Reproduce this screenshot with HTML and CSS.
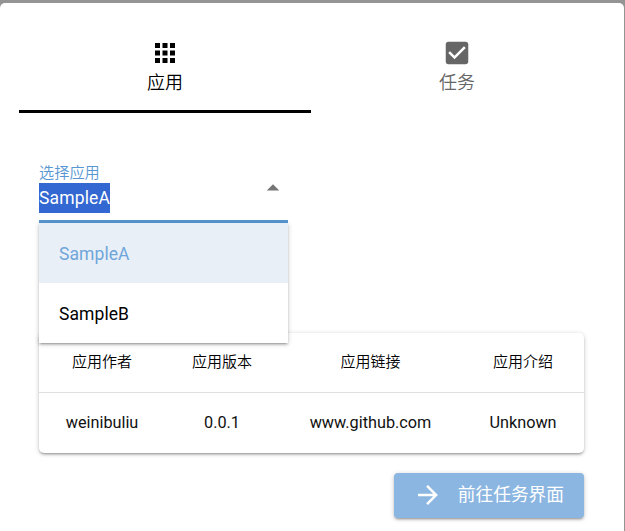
FILE: index.html
```html
<!DOCTYPE html>
<html lang="zh-CN">
<head>
<meta charset="utf-8">
<title>应用</title>
<link rel="stylesheet" href="styles.css">
</head>
<body>
<main class="dialog">
  <nav class="tabs">
    <div class="tab tab-active">
      <svg class="icon" viewBox="0 0 24 24"><path d="M4 8h4V4H4zm6 12h4v-4h-4zm-6 0h4v-4H4zm0-6h4v-4H4zm6 0h4v-4h-4zm6-10v4h4V4zm-6 4h4V4h-4zm6 6h4v-4h-4zm0 6h4v-4h-4z"/></svg>
      <span>应用</span>
    </div>
    <div class="tab">
      <svg class="icon" viewBox="0 0 24 24"><path d="M19 3H5c-1.11 0-2 .9-2 2v14c0 1.1.89 2 2 2h14c1.11 0 2-.9 2-2V5c0-1.1-.89-2-2-2zm-9 14l-5-5 1.41-1.41L10 14.17l7.59-7.59L19 8l-9 9z"/></svg>
      <span>任务</span>
    </div>
  </nav>
  <section class="select">
    <div class="field">
      <div>
        <div class="label">选择应用</div>
        <div class="value"><span class="selected-text">SampleA</span></div>
      </div>
      <svg class="icon caret" viewBox="0 0 24 24"><path d="M7 14l5-5 5 5z"/></svg>
    </div>
    <ul class="menu">
      <li class="option option-active">SampleA</li>
      <li class="option">SampleB</li>
    </ul>
  </section>
  <table class="info">
    <colgroup><col class="author"><col class="version"><col class="link"><col class="intro"></colgroup>
    <thead><tr><th>应用作者</th><th>应用版本</th><th>应用链接</th><th>应用介绍</th></tr></thead>
    <tbody><tr><td>weinibuliu</td><td>0.0.1</td><td>www.github.com</td><td>Unknown</td></tr></tbody>
  </table>
  <div class="actions">
    <button class="go">
      <svg class="icon" viewBox="0 0 24 24"><path d="M12 4l-1.41 1.41L16.17 11H4v2h12.17l-5.58 5.59L12 20l8-8z"/></svg>
      <span>前往任务界面</span>
    </button>
  </div>
</main>
</body>
</html>
```
FILE: styles.css
```css
* { box-sizing: border-box; }
body {
  margin: 0;
  height: 531px;
  padding: 3px 1px 0 0;
  overflow: hidden;
  background: #949494;
  font-family: Roboto, "Noto Sans CJK SC", sans-serif;
}
.dialog {
  height: 528px;
  padding: 20px 40px 0 39px;
  border-radius: 5px 5px 0 0;
  background: #fff;
}
.icon { display: block; width: 30px; height: 30px; fill: currentColor; }
.tabs { display: flex; margin: 0 -20px; width: 584px; height: 90px; }
.tab {
  flex: 1;
  display: flex;
  flex-direction: column;
  align-items: center;
  padding-top: 15px;
  color: #666;
  font-size: 18px;
  line-height: 30px;
  border-bottom: 3px solid transparent;
}
.tab span { font-weight: 350; }
.tab-active { color: #000; border-bottom-color: #000; }
.select { position: relative; width: 249px; margin-top: 50px; }
.field {
  display: flex;
  justify-content: space-between;
  height: 60px;
  border-bottom: 3px solid #5897d2;
}
.label {
  height: 20px;
  font-size: 15.2px;
  font-weight: 350;
  line-height: 21px;
  color: #5897d2;
}
.value { height: 30px; font-size: 17.5px; line-height: 30px; letter-spacing: .15px; }
.selected-text { display: inline-block; background: #3367d1; color: #fff; }
.caret { margin-top: 10px; color: #757575; }
.menu {
  position: absolute;
  z-index: 1;
  top: 60px;
  left: 0;
  width: 249px;
  margin: 0;
  padding: 0;
  list-style: none;
  background: #fff;
  box-shadow: 0 1px 5px rgba(0,0,0,.2), 0 2px 2px rgba(0,0,0,.14), 0 3px 1px -2px rgba(0,0,0,.12);
}
.option { height: 60px; padding-left: 20px; font-size: 17.5px; line-height: 62px; letter-spacing: .08px; }
.option-active { background: #e8eff7; color: #6fa6da; }
.info {
  width: 545px;
  margin-top: 110px;
  border-collapse: separate;
  border-spacing: 0;
  table-layout: fixed;
  border-radius: 5px;
  background: #fff;
  box-shadow: 0 1px 5px rgba(0,0,0,.2), 0 2px 2px rgba(0,0,0,.14), 0 3px 1px -2px rgba(0,0,0,.12);
}
.author { width: 126px; }
.version { width: 114px; }
.link { width: 183px; }
.intro { width: 122px; }
.info th, .info td { height: 60px; padding: 0; text-align: center; }
.info th { padding-bottom: 4px; font-size: 15px; font-weight: 350; border-bottom: 1px solid #dfdfdf; }
.info td { padding-bottom: 2px; font-size: 16.25px; color: #111; }
.actions { display: flex; justify-content: flex-end; margin-top: 20px; }
.go {
  display: flex;
  align-items: center;
  gap: 15px;
  width: 190px;
  height: 45px;
  padding: 0 20px 1px 19px;
  border: 0;
  border-radius: 4px;
  background: #8bb6e1;
  color: #fff;
  font: 400 17.7px/30px Roboto, "Noto Sans CJK SC", sans-serif;
  white-space: nowrap;
  box-shadow: 0 1px 5px rgba(0,0,0,.2), 0 2px 2px rgba(0,0,0,.14), 0 3px 1px -2px rgba(0,0,0,.12);
}
```
